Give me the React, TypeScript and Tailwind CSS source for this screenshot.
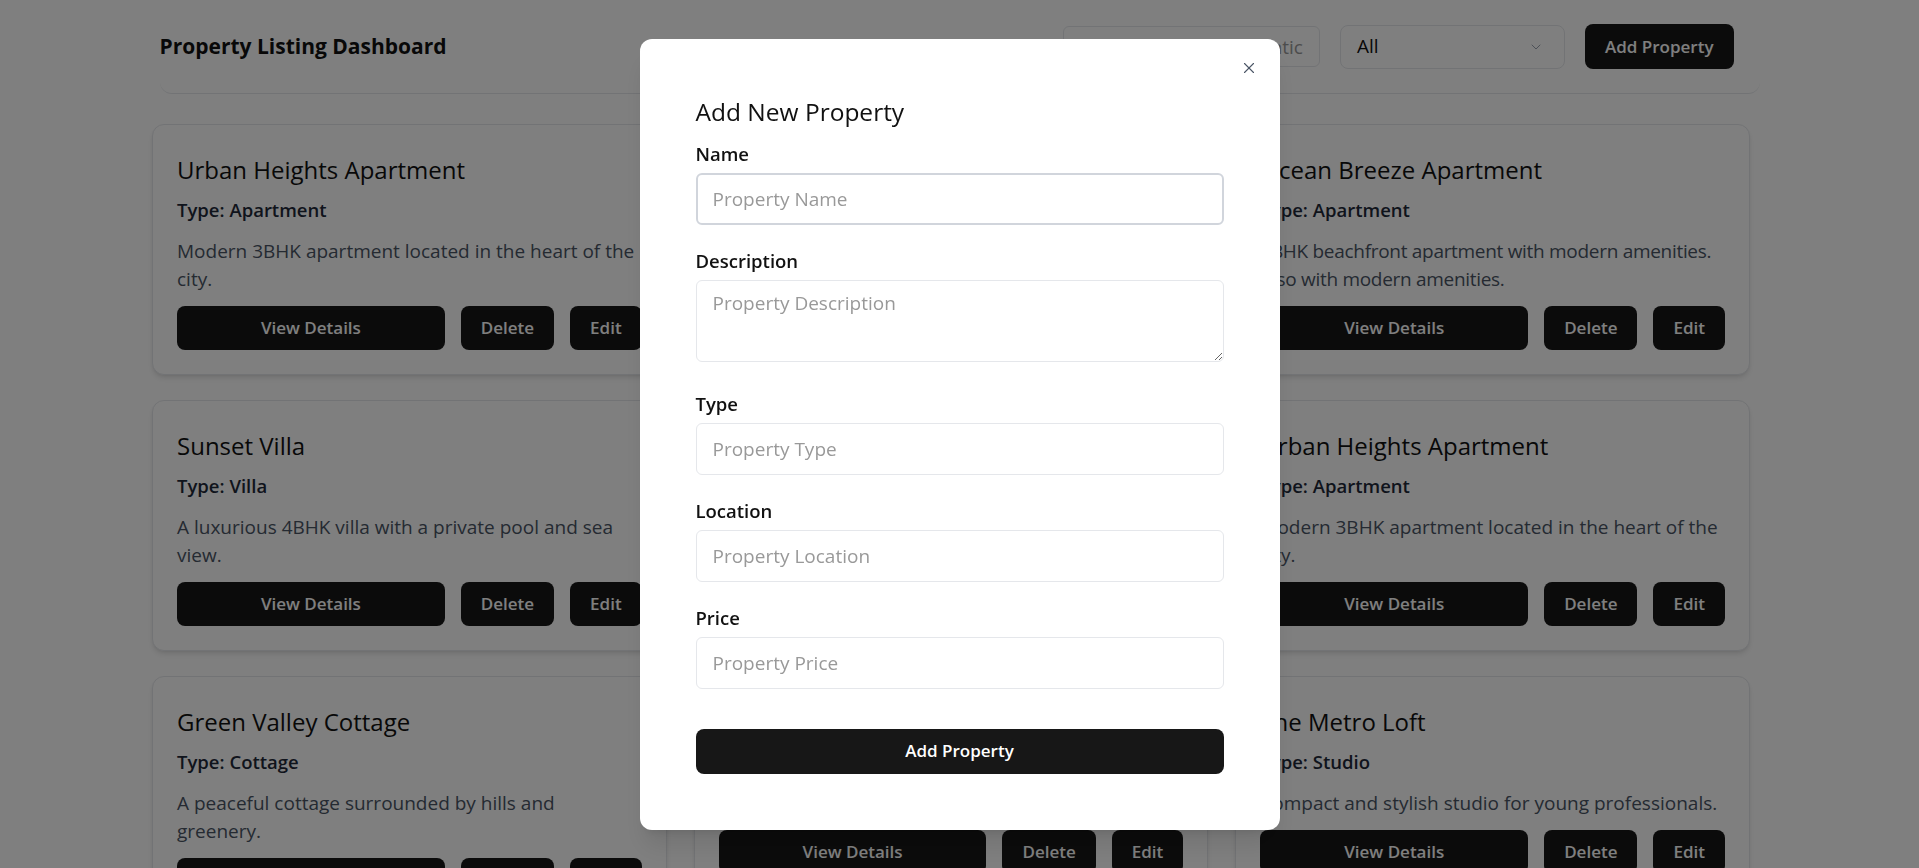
import { ChevronDown, X } from 'lucide-react';

interface Property {
	name: string;
	type: string;
	description: string;
	tight?: boolean;
}

const properties: Property[] = [
	{ name: 'Urban Heights Apartment', type: 'Apartment', description: 'Modern 3BHK apartment located in the heart of the city.' },
	{ name: 'Skyline Penthouse', type: 'Penthouse', description: 'Spacious penthouse with a rooftop terrace and city views.' },
	{ name: 'Ocean Breeze Apartment', type: 'Apartment', description: '3BHK beachfront apartment with modern amenities. Also with modern amenities.', tight: true },
	{ name: 'Sunset Villa', type: 'Villa', description: 'A luxurious 4BHK villa with a private pool and sea view.' },
	{ name: 'Palm Grove Residency', type: 'Apartment', description: 'Elegant 2BHK residence close to shopping and good schools.' },
	{ name: 'Urban Heights Apartment', type: 'Apartment', description: 'Modern 3BHK apartment located in the heart of the city.' },
	{ name: 'Green Valley Cottage', type: 'Cottage', description: 'A peaceful cottage surrounded by hills and greenery.' },
	{ name: 'Lakeview Bungalow', type: 'Bungalow', description: 'Charming bungalow overlooking the lake.' },
	{ name: 'The Metro Loft', type: 'Studio', description: 'Compact and stylish studio for young professionals.' },
];

function PropertyCard({ property }: { property: Property }) {
	return (
		<div className="flex flex-col rounded-xl border border-gray-200 bg-white p-6 shadow-md">
			<h2 className="mb-2 mt-[3px] text-2xl leading-9 text-[#111]">{property.name}</h2>
			<p className="mb-[13px] text-[18.5px] font-semibold leading-7 text-gray-800">Type: {property.type}</p>
			<p className={property.tight ? 'mb-[13px] text-[19px] leading-7 tracking-[-0.3px] text-gray-600' : 'mb-[13px] text-[19px] leading-7 text-gray-600'}>
				{property.description}
			</p>
			<div className="flex gap-4">
				<button className="h-11 flex-1 rounded-lg bg-neutral-900 text-[17px] font-semibold text-white">View Details</button>
				<button className="h-11 rounded-lg bg-neutral-900 px-5 text-[17px] font-semibold text-white">Delete</button>
				<button className="h-11 rounded-lg bg-neutral-900 px-5 text-[17px] font-semibold text-white">Edit</button>
			</div>
		</div>
	);
}

function Field({ label, placeholder, focused, gap }: { label: string; placeholder: string; focused?: boolean; gap: string }) {
	return (
		<div className={`flex flex-col ${gap}`}>
			<label className="mb-[5px] text-[18.5px] font-semibold leading-7 text-[#111]">{label}</label>
			<input
				autoFocus={focused}
				placeholder={placeholder}
				className={
					focused
						? 'h-[52px] rounded-md border-2 border-gray-300 px-[15px] text-[19px] outline-none placeholder:text-[#999]'
						: 'h-[52px] rounded-md border border-gray-200 px-4 text-[19px] outline-none placeholder:text-[#999]'
				}
			/>
		</div>
	);
}

export default function App() {
	return (
		<div className="min-h-screen bg-white font-['Open_Sans',sans-serif] text-[#111]">
			<header className="mx-auto flex h-[94px] w-[1600px] items-center justify-between rounded-b-xl border-b border-gray-200 pr-[26px]">
				<h1 className="text-[21px] font-bold">Property Listing Dashboard</h1>
				<div className="flex items-center gap-5">
					<input
						placeholder="Search automatic"
						className="h-[41px] w-[257px] rounded-md border border-gray-200 px-4 text-right text-[19px] outline-none placeholder:text-[#999]"
					/>
					<div className="flex h-11 w-[225px] items-center justify-between rounded-lg border border-gray-200 pl-4 pr-5 text-[19px]">
						<span>All</span>
						<ChevronDown size={16} strokeWidth={1.5} className="text-gray-400" />
					</div>
					<button className="h-[45px] rounded-lg bg-neutral-900 px-5 text-[17px] font-semibold text-white">Add Property</button>
				</div>
			</header>

			<main className="ml-[152px] mt-[30px] grid w-[1598px] grid-cols-3 items-start gap-x-[27px] gap-y-[25px]">
				{properties.map((p, i) => (
					<PropertyCard key={i} property={p} />
				))}
			</main>

			<div className="fixed inset-0 flex items-center justify-center bg-black/50">
				<div className="relative w-[640px] rounded-xl bg-white px-14 pb-[56px] pt-[55px] shadow-xl">
					<button className="absolute right-[22px] top-[20px] text-gray-600">
						<X size={18} strokeWidth={1.5} />
					</button>
					<h2 className="mb-[10px] text-[24.5px] leading-9 text-[#111]">Add New Property</h2>
					<Field label="Name" placeholder="Property Name" focused gap="mb-[22px]" />
					<div className="mb-[28px] flex flex-col">
						<label className="mb-[5px] text-[18.5px] font-semibold leading-7 text-[#111]">Description</label>
						<textarea
							placeholder="Property Description"
							className="block h-[82px] rounded-md border border-gray-200 px-4 py-2 text-[19px] outline-none placeholder:text-[#999]"
						/>
					</div>
					<Field label="Type" placeholder="Property Type" gap="mb-[22px]" />
					<Field label="Location" placeholder="Property Location" gap="mb-[22px]" />
					<Field label="Price" placeholder="Property Price" gap="mb-[40px]" />
					<button className="h-[45px] w-full rounded-lg bg-neutral-900 text-[17px] font-semibold text-white">Add Property</button>
				</div>
			</div>
		</div>
	);
}
